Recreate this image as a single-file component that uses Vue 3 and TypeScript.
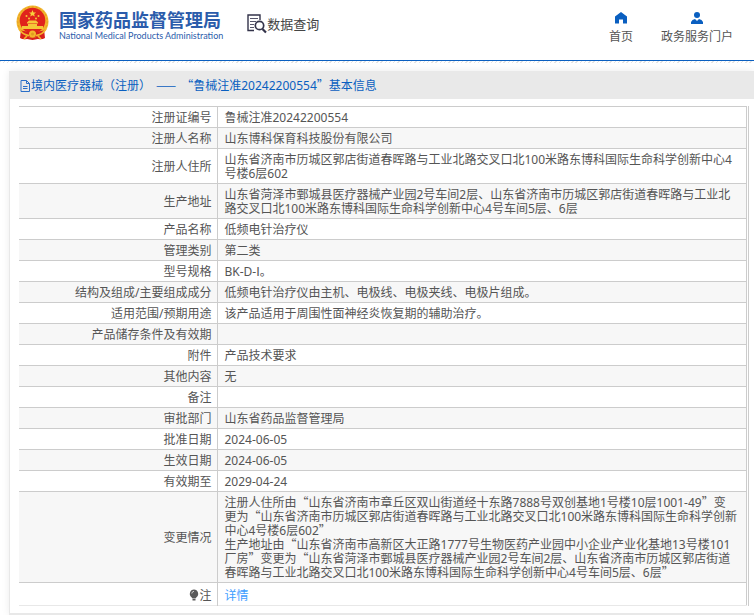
<script setup lang="ts">
interface Row {
  label: string
  lines: string[]
}

const rows: Row[] = [
  { label: '注册证编号', lines: ['鲁械注准20242200554'] },
  { label: '注册人名称', lines: ['山东博科保育科技股份有限公司'] },
  { label: '注册人住所', lines: ['山东省济南市历城区郭店街道春晖路与工业北路交叉口北100米路东博科国际生命科学创新中心4号楼6层602'] },
  { label: '生产地址', lines: ['山东省菏泽市鄄城县医疗器械产业园2号车间2层、山东省济南市历城区郭店街道春晖路与工业北路交叉口北100米路东博科国际生命科学创新中心4号车间5层、6层'] },
  { label: '产品名称', lines: ['低频电针治疗仪'] },
  { label: '管理类别', lines: ['第二类'] },
  { label: '型号规格', lines: ['BK-D-Ⅰ。'] },
  { label: '结构及组成/主要组成成分', lines: ['低频电针治疗仪由主机、电极线、电极夹线、电极片组成。'] },
  { label: '适用范围/预期用途', lines: ['该产品适用于周围性面神经炎恢复期的辅助治疗。'] },
  { label: '产品储存条件及有效期', lines: [] },
  { label: '附件', lines: ['产品技术要求'] },
  { label: '其他内容', lines: ['无'] },
  { label: '备注', lines: [] },
  { label: '审批部门', lines: ['山东省药品监督管理局'] },
  { label: '批准日期', lines: ['2024-06-05'] },
  { label: '生效日期', lines: ['2024-06-05'] },
  { label: '有效期至', lines: ['2029-04-24'] },
  {
    label: '变更情况',
    lines: [
      '注册人住所由“山东省济南市章丘区双山街道经十东路7888号双创基地1号楼10层1001-49”变',
      '更为“山东省济南市历城区郭店街道春晖路与工业北路交叉口北100米路东博科国际生命科学创新中心4号楼6层602”',
      '生产地址由“山东省济南市高新区大正路1777号生物医药产业园中小企业产业化基地13号楼101厂房”变更为“山东省菏泽市鄄城县医疗器械产业园2号车间2层、山东省济南市历城区郭店街道春晖路与工业北路交叉口北100米路东博科国际生命科学创新中心4号车间5层、6层”',
    ],
  },
]

const title = '境内医疗器械（注册） —— “鲁械注准20242200554”基本信息'

// Curly quotes and dashes are set in full-width cells, like the characters beside them.
const split = (text: string): string[] => text.split(/([“”Ⅰ]|—+)/).filter((s) => s !== '')

const kind = (s: string): string => {
  if (s === '“') return 'open'
  if (s === '”') return 'close'
  if (s === 'Ⅰ') return 'numeral'
  return s.startsWith('—') ? 'dash' : 'run'
}
</script>

<template>
  <header class="top">
    <a class="brand" href="#">
      <svg class="emblem" viewBox="0 0 33 36" aria-hidden="true">
        <path d="M5 24L4 33Q7 35 11 34L16.500 35L22 34Q26 35 29 33L28 24Z" fill="#d8201c" />
        <circle cx="16.500" cy="16.500" r="16" fill="#f3b62c" />
        <circle cx="16.500" cy="16.500" r="14.700" fill="none" stroke="#e09a20" stroke-width="1" stroke-dasharray="2 2" />
        <circle cx="16.500" cy="15.500" r="12.800" fill="#e0231c" />
        <path d="M16.500 5l1 2.400 2.600.1-2 1.600.7 2.500-2.300-1.400-2.300 1.400.7-2.500-2-1.600 2.600-.1z" fill="#f8d23c" />
        <g fill="#f5c738">
          <circle cx="10.500" cy="11" r="1" /><circle cx="13" cy="13.500" r="1" />
          <circle cx="20" cy="13.500" r="1" /><circle cx="22.500" cy="11" r="1" />
          <path d="M11 17.500l2-2h7l2 2v1H11zM12 19h9v2H12zM6 21h21v3H6z" />
        </g>
        <path d="M5 25.500Q16.500 28 28 25.500L26 31Q16.500 33 7 31z" fill="#d8201c" />
        <path d="M3 24Q7 30 13 30.500M30 24Q26 30 20 30.500M8 34l3-3M25 34l-3-3" fill="none" stroke="#f3b62c" stroke-width="1.600" />
        <circle cx="16.500" cy="29" r="3.500" fill="#f3b62c" />
        <circle cx="16.500" cy="29" r="1.500" fill="#e09a20" />
      </svg>
      <span class="names">
        <span class="cn">国家药品监督管理局</span>
        <span class="en">National Medical Products Administration</span>
      </span>
    </a>
    <a class="query" href="#">
      <svg class="query-icon" viewBox="0 0 20 20" aria-hidden="true">
        <path d="M7 16.500H1V1H13V6" fill="none" stroke="#33334a" stroke-width="1.400" />
        <path d="M3 4.500H11M3 7.500H9M3 10.500H7M3 13.500H7" stroke="#55556a" stroke-width="1.200" />
        <circle cx="12.500" cy="11.500" r="4.200" fill="#fff" stroke="#33334a" stroke-width="1.700" />
        <path d="M15.500 15L19 18.500" stroke="#33334a" stroke-width="2.200" />
      </svg>
      <span>数据查询</span>
    </a>
    <nav class="links">
      <a href="#">
        <svg viewBox="0 0 12 12" aria-hidden="true"><path d="M6 0L12 4.500V11.500H8V7.500H4V11.500H0V4.500z" fill="#0a5fc0" /></svg>
        <span>首页</span>
      </a>
      <a href="#">
        <svg viewBox="0 0 12 12" aria-hidden="true"><circle cx="6" cy="3" r="3" fill="#0a5fc0" /><path d="M0 12V10Q1 7.500 4 7L6 9L8 7Q11 7.500 12 10V12z" fill="#0a5fc0" /></svg>
        <span>政务服务门户</span>
      </a>
    </nav>
  </header>

  <main class="page">
    <section class="panel">
      <h1 class="title">
        <svg viewBox="0 0 11 12" aria-hidden="true"><path d="M1 .5H6.500L9.500 3.500V11.500H1zM6.500 .5V3.500H9.500M3 6.500H7.500M3 8.500H7.500" fill="none" stroke="#2a6fc8" /></svg>
        <span><span v-for="(s, i) in split(title)" :key="i" :class="kind(s)">{{ s }}</span></span>
      </h1>
      <div class="body">
        <div class="frame">
          <table>
            <tbody>
              <tr v-for="row in rows" :key="row.label">
                <th scope="row">{{ row.label }}</th>
                <td>
                  <div v-for="(line, n) in row.lines" :key="n"><span v-for="(s, i) in split(line)" :key="i" :class="kind(s)">{{ s }}</span></div>
                </td>
              </tr>
              <tr class="note">
                <th scope="row">
                  <svg viewBox="0 0 10 12" aria-hidden="true"><path d="M5 0.500a4.300 4.300 0 0 1 2.500 7.700L6.500 9.500h-3L2.500 8.200A4.300 4.300 0 0 1 5 .5zM3.500 10h3v1.500h-3z" fill="#5a5a5a" /><path d="M2.800 4.500Q3 2.500 5 2.300" fill="none" stroke="#ccc" /></svg>注
                </th>
                <td><a href="#">详情</a></td>
              </tr>
            </tbody>
          </table>
        </div>
      </div>
    </section>
  </main>
</template>

<style>
body {
  margin: 0;
  background: #fff;
}
</style>

<style scoped>
.top,
.page {
  font-family: "Noto Sans", "Noto Sans CJK SC", sans-serif;
  font-size: 12px;
  color: #555;
}
a {
  color: inherit;
  text-decoration: none;
}
.top {
  display: flex;
  align-items: flex-start;
  box-sizing: border-box;
  height: 61px;
  padding: 5px 21px 0 16px;
  border-bottom: 1px solid #0a5fc0;
}
.brand {
  display: flex;
  gap: 10px;
  color: #2b5cab;
}
.emblem {
  width: 33px;
  height: 36px;
}
.names {
  display: flex;
  flex-direction: column;
  padding-top: 4px;
}
.cn {
  font-family: "Noto Sans CJK SC", sans-serif;
  font-size: 18px;
  line-height: 20px;
  font-weight: 700;
}
.en {
  font-family: Lato, sans-serif;
  font-size: 9px;
  line-height: 14px;
}
.query {
  display: flex;
  align-items: center;
  margin: 9px 0 0 24px;
  font-size: 13px;
  line-height: 20px;
  color: #444;
}
.query-icon {
  width: 20px;
  height: 20px;
}
.links {
  display: flex;
  gap: 28px;
  margin-left: auto;
  padding-top: 7px;
}
.links a {
  display: flex;
  flex-direction: column;
  align-items: center;
  gap: 5px;
  line-height: 16px;
}
.links svg {
  width: 12px;
  height: 12px;
}
.page {
  padding: 10px 0 0 9px;
  background: repeating-linear-gradient(135deg, #e4e4e4 0 1px, #fff 1px 3px) 0 0 / 100% 2px no-repeat;
}
.panel {
  border-left: 1px solid #e8e8e8;
  border-bottom: 2px solid #e8e8e8;
  box-shadow: 0 0 8px rgba(0, 0, 0, 0.08);
}
.title {
  display: flex;
  align-items: center;
  box-sizing: border-box;
  height: 28px;
  margin: 0;
  padding: 2px 10px 0;
  background: #e9e9e9;
  color: #0a5fc0;
  font-size: 12px;
  line-height: 16px;
  font-weight: 400;
}
.title svg {
  width: 11px;
  height: 12px;
}
.body {
  padding: 7px 5px 7px 9px;
}
.frame {
  border-right: 1px solid #ccc;
  padding-right: 1px;
}
table {
  width: 100%;
  border-collapse: collapse;
  border-right: 1px solid #ccc;
  table-layout: fixed;
}
tr {
  border-top: 1px solid #ccc;
}
tr:nth-child(even) {
  background: #f7f7f7;
}
th,
td {
  height: 14px;
  padding: 4px 6px 2px 7px;
  line-height: 14px;
  font-weight: 400;
  word-break: break-all;
}
th {
  box-sizing: border-box;
  width: 198px;
  padding-right: 5px;
  text-align: right;
  border-right: 1px solid #ccc;
}
.open,
.close,
.dash {
  display: inline-block;
  width: 12px;
  font-family: "Noto Sans CJK SC", sans-serif;
  line-height: 12px;
}
.open {
  text-align: right;
}
.dash {
  width: 24px;
  text-align: center;
}
.numeral {
  font-family: "DejaVu Sans", sans-serif;
  line-height: 12px;
}
.note {
  background: #fff;
  border-bottom: 1px solid #e8e8e8;
}
.note th,
.note td {
  height: 16px;
  padding-top: 5px;
  padding-bottom: 1px;
}
.note svg {
  width: 10px;
  height: 12px;
  vertical-align: -1px;
}
.note a {
  color: #409eff;
}
</style>
